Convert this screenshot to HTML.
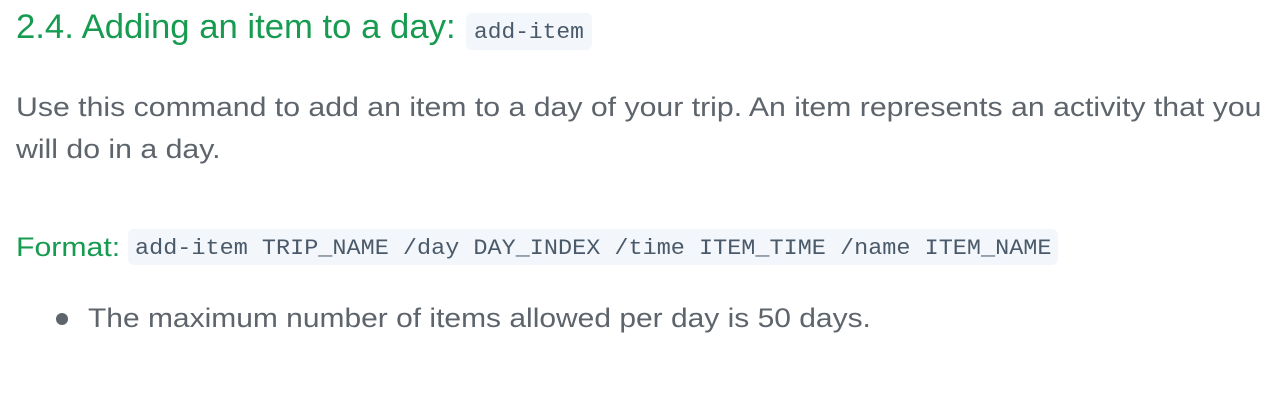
<!DOCTYPE html><html><head><style>
body{margin:0;width:1287px;height:401px;background:#fff;position:relative;overflow:hidden;font-family:"Liberation Sans",sans-serif}
.a{position:absolute;white-space:nowrap;transform-origin:0 0}
code{font-family:"Liberation Mono",monospace;color:#4a5a6a;background:#f3f6fa;border-radius:6px}
</style></head><body>
<div class="a" style="left:16px;top:8px;font-size:34px;color:#179b50;transform:scaleX(1.02)">2.4. Adding an item to a day:</div>
<code class="a" style="left:466px;top:13px;font-size:22px;padding:5px 8px;width:110px;height:27px;box-sizing:content-box"></code>
<div class="a" style="left:474px;top:20px;font-size:22px;font-family:'Liberation Mono',monospace;color:#4a5a6a;transform:scaleX(1.04)">add-item</div>
<div class="a" style="left:16px;top:86px;font-size:27px;line-height:42px;color:#5e646b;transform:scaleX(1.12)">Use this command to add an item to a day of your trip. An item represents an activity that you<br>will do in a day.</div>
<div class="a" style="left:16px;top:228px;font-size:27px;color:#179b50;line-height:38px;transform:scaleX(1.12)">Format:</div>
<div class="a" style="left:128px;top:229px;width:930px;height:36px;background:#f3f6fa;border-radius:6px"></div>
<div class="a" style="left:135px;top:236px;font-size:22px;font-family:'Liberation Mono',monospace;color:#4a5a6a;transform:scaleX(1.068)">add-item TRIP_NAME /day DAY_INDEX /time ITEM_TIME /name ITEM_NAME</div>
<div class="a" style="left:56px;top:313px;width:12px;height:12px;border-radius:50%;background:#5e646b"></div>
<div class="a" style="left:88px;top:299px;font-size:27px;color:#5e646b;line-height:38px;transform:scaleX(1.11)">The maximum number of items allowed per day is 50 days.</div>
</body></html>
